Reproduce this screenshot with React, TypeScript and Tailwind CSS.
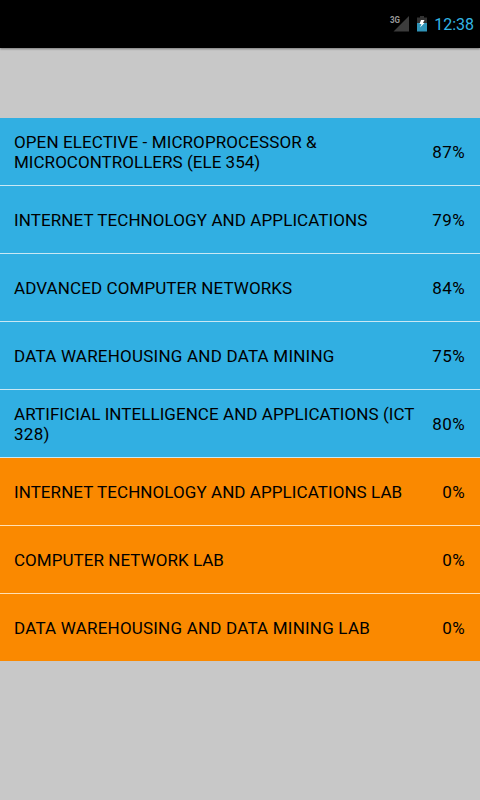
const rows = [
  { name: [["OPEN ELECTIVE - MICROPROCESSOR &", "tracking-[0.1px]"], ["MICROCONTROLLERS (ELE 354)", "tracking-[0.03px]"]], value: 87 },
  { name: [["INTERNET TECHNOLOGY AND APPLICATIONS", "tracking-[0.09px]"]], value: 79 },
  { name: [["ADVANCED COMPUTER NETWORKS", "tracking-[0.1px]"]], value: 84 },
  { name: [["DATA WAREHOUSING AND DATA MINING", "tracking-[0.22px]"]], value: 75 },
  { name: [["ARTIFICIAL INTELLIGENCE AND APPLICATIONS (ICT", "tracking-[0.06px]"], ["328)", "tracking-[0.3px]"]], value: 80 },
  { name: [["INTERNET TECHNOLOGY AND APPLICATIONS LAB", "tracking-[0.07px]"]], value: 0 },
  { name: [["COMPUTER NETWORK LAB", "tracking-[0.04px]"]], value: 0 },
  { name: [["DATA WAREHOUSING AND DATA MINING LAB", "tracking-[0.2px]"]], value: 0 },
];

function StatusIcons() {
  return (
    <svg width="40" height="20" viewBox="0 0 40 20" className="mr-[5px]">
      <path d="M20 2V17.5H4.5Z" fill="#3c3c3c" />
      <text x="1" y="9" fill="#999" fontSize="9" fontWeight="700" textLength="10" lengthAdjust="spacingAndGlyphs">3G</text>
      <path d="M31 2H35V3.5H38V9H28V3.5H31Z" fill="#333" />
      <path d="M28 9H38V17.5H28Z" fill="#3094b8" />
      <path d="M32 6H35.5L34 9H35.5L31 13.5L32.5 10H30.5Z" fill="#fff" />
    </svg>
  );
}

export default function App() {
  return (
    <div className="flex h-[800px] w-[480px] flex-col bg-[#c8c8c8] font-[Roboto,sans-serif] text-black">
      <header className="flex h-12 shrink-0 items-center justify-end bg-black pr-1.5 text-[#33b5e5] shadow-[0_1px_2px_rgba(0,0,0,0.4)]">
        <StatusIcons />
        <span className="pt-0.5 text-base">12:38</span>
      </header>
      <main className="mt-[70px] flex flex-col">
        {rows.map((r, i) => (
          <div
            key={i}
            className={`flex h-[68px] items-center justify-between border-b pr-[15px] pl-3.5 text-[17px] leading-5 last:h-[67px] last:border-b-0 ${r.value ? "border-[#c9e8f4] bg-[#31afe2]" : "border-[#ffe0b3] bg-[#fa8900]"}`}
          >
            <div className="whitespace-nowrap">
              {r.name.map(([line, tracking]) => (
                <div key={line} className={tracking}>{line}</div>
              ))}
            </div>
            <div className="tracking-[0.4px]">{r.value}%</div>
          </div>
        ))}
      </main>
    </div>
  );
}
